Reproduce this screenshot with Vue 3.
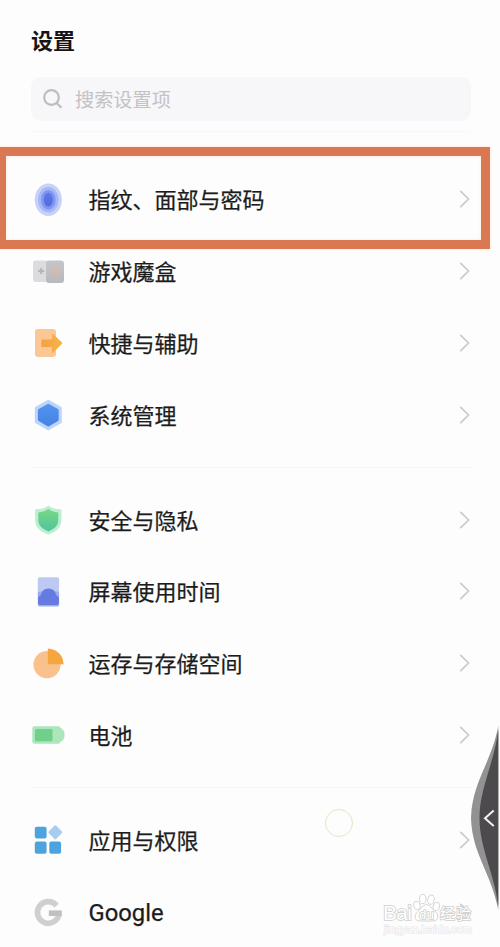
<script setup>
const groups = [
  [
    { icon: 'finger', label: '指纹、面部与密码' },
    { icon: 'game', label: '游戏魔盒' },
    { icon: 'shortcut', label: '快捷与辅助' },
    { icon: 'system', label: '系统管理' },
  ],
  [
    { icon: 'shield', label: '安全与隐私' },
    { icon: 'screen', label: '屏幕使用时间' },
    { icon: 'storage', label: '运存与存储空间' },
    { icon: 'battery', label: '电池' },
  ],
  [
    { icon: 'apps', label: '应用与权限' },
    { icon: 'google', label: 'Google', latin: true },
  ],
]
</script>

<template>
  <main class="screen">
    <h1 class="title">设置</h1>
    <div class="search">
      <svg class="search-icon" viewBox="0 0 22 22">
        <circle cx="9.5" cy="9.5" r="7.3" />
        <path d="M14.8 15.2 L19.5 19.8" />
      </svg>
      <span>搜索设置项</span>
    </div>

    <section v-for="(group, g) in groups" :key="g" class="group">
      <div v-for="row in group" :key="row.icon" class="row">
        <svg class="icon" viewBox="0 0 36 36">
          <defs>
            <linearGradient id="gFinger" x1="0" y1="0" x2="0" y2="1"><stop offset="0" stop-color="#5a7bea" /><stop offset="1" stop-color="#5868d8" /></linearGradient>
            <linearGradient id="gOrange" x1="0" y1="0" x2="1" y2="0"><stop offset="0" stop-color="#f3a045" /><stop offset="1" stop-color="#f8b548" /></linearGradient>
            <linearGradient id="gBlue" x1="0" y1="0" x2="0" y2="1"><stop offset="0" stop-color="#5393ed" /><stop offset="1" stop-color="#4583e5" /></linearGradient>
            <linearGradient id="gGreen" x1="0" y1="0" x2="0" y2="1"><stop offset="0" stop-color="#7ad783" /><stop offset="1" stop-color="#4fc4a0" /></linearGradient>
            <linearGradient id="gGrey" x1="0" y1="0" x2="0" y2="1"><stop offset="0" stop-color="#c6c6ca" /><stop offset="1" stop-color="#b9b9bd" /></linearGradient>
          </defs>
          <g v-if="row.icon === 'finger'">
            <ellipse cx="18.3" cy="17.7" rx="13.6" ry="16.2" fill="#c8d2f9" />
            <ellipse cx="18.3" cy="17.7" rx="10.3" ry="12.8" fill="#a6b7f6" />
            <ellipse cx="18.3" cy="17.7" rx="7.3" ry="9.8" fill="#8095ef" />
            <ellipse cx="18.3" cy="17.7" rx="4.5" ry="6.9" fill="url(#gFinger)" />
          </g>
          <g v-else-if="row.icon === 'game'">
            <rect x="3" y="6.5" width="15" height="21.5" rx="3" fill="#dcdcdf" />
            <rect x="16" y="6.5" width="18" height="22.5" rx="3" fill="url(#gGrey)" />
            <path d="M11.2 14 V20 M8.2 17 H14.2" stroke="#b3b3b8" stroke-width="2" />
            <circle cx="26.5" cy="14" r="1.7" fill="#ddbba8" />
            <circle cx="23.7" cy="17.2" r="1.7" fill="#e5b698" />
            <circle cx="29.3" cy="17.5" r="1.7" fill="#ddbba8" />
            <circle cx="26.5" cy="20.5" r="1.7" fill="#e5b698" />
          </g>
          <g v-else-if="row.icon === 'shortcut'">
            <rect x="5" y="4" width="21" height="28" rx="3" fill="#fac795" />
            <path d="M11.5 14.5 H22 V9.6 Q22 8 23.3 9.2 L31.8 17.2 Q32.7 18.2 31.8 19 L23.3 27.4 Q22 28.5 22 26.8 V22 H11.5 Z" fill="url(#gOrange)" />
          </g>
          <g v-else-if="row.icon === 'system'">
            <path d="M18.3 4.2 L30.3 11 V25 L18.3 31.8 L6.3 25 V11 Z" fill="#bdd5fa" stroke="#bdd5fa" stroke-width="3" stroke-linejoin="round" />
            <path d="M18.3 8.2 L27.2 13.2 V22.8 L18.3 27.9 L9.4 22.8 V13.2 Z" fill="url(#gBlue)" stroke="url(#gBlue)" stroke-width="3" stroke-linejoin="round" />
          </g>
          <g v-else-if="row.icon === 'shield'">
            <path d="M18.3 3.4 Q23.5 7.2 31.5 7.6 V18 Q31.5 28 18.3 32.6 Q5.1 28 5.1 18 V7.6 Q13 7.2 18.3 3.4 Z" fill="#bcefd2" />
            <path d="M18.3 6.8 Q22 10 28.3 10.5 V18.5 Q28.3 25.4 18.3 29.4 Q8.3 25.4 8.3 18.5 V10.5 Q14.5 10 18.3 6.8 Z" fill="url(#gGreen)" />
          </g>
          <g v-else-if="row.icon === 'screen'">
            <rect x="7.8" y="3.3" width="21.3" height="19" rx="2" fill="#bdc9f2" />
            <rect x="7.8" y="17.5" width="21.3" height="15" rx="2" fill="#9babf0" />
            <path d="M8 24.5 Q8 22.2 10.8 21.2 Q12 14.6 18.5 14.6 Q25 14.6 26.2 21.2 Q29 22.2 29 24.5 V28.8 Q29 31 26.8 31 H10.2 Q8 31 8 28.8 Z" fill="#667be1" />
          </g>
          <g v-else-if="row.icon === 'storage'">
            <circle cx="17" cy="18.6" r="13.6" fill="#f9c28c" />
            <path d="M17.8 2.6 Q32.5 4.1 33.6 18.2 H17.8 Z" fill="#f6a53f" />
          </g>
          <g v-else-if="row.icon === 'battery'">
            <path d="M4.5 9.3 H28.5 Q30 9.3 30.5 11 Q34.6 12.8 34.6 18 Q34.6 23.2 30.5 24.8 Q30 26.8 28.5 26.8 H4.5 Q2.3 26.8 2.3 24.6 V11.5 Q2.3 9.3 4.5 9.3 Z" fill="#ace6bb" />
            <rect x="5" y="12" width="17.5" height="12.3" rx="1.3" fill="#6fcf8b" />
          </g>
          <g v-else-if="row.icon === 'apps'">
            <rect x="4.8" y="4.8" width="11.8" height="11.8" rx="2" fill="#4fa3dc" />
            <rect x="4.8" y="19.6" width="11.8" height="12.2" rx="2" fill="#4fa3dc" />
            <rect x="19.3" y="19.6" width="11.8" height="12.2" rx="2" fill="#4fa3dc" />
            <rect x="20" y="5" width="10.6" height="10.6" rx="1.5" fill="#a9cdf1" transform="rotate(45 25.3 10.3)" />
          </g>
          <g v-else fill="none" stroke="#cfcfd1" stroke-width="5.6">
            <path d="M26.6 11.6 A10.8 10.8 0 1 0 29 19.6" />
            <path d="M18.8 19.2 H31.8" stroke="#c0c0c2" />
          </g>
        </svg>
        <span class="label" :class="{ latin: row.latin }">{{ row.label }}</span>
        <svg class="chevron" viewBox="0 0 12 20"><path d="M1.2 1.8 L9.6 10 L1.2 18.2" /></svg>
      </div>
    </section>

    <div class="highlight"></div>
    <div class="touch"></div>

    <svg class="drawer" viewBox="0 0 30 184">
      <path d="M28.3 0 C21 38 2 56 1 92 C2 128 21 146 28.3 184 Z" fill="#929293" />
      <path d="M28.3 4 C24 38 9.5 62 9.5 92 C9.5 122 24 146 28.3 180 Z" fill="#4c4a4d" />
      <path d="M23.7 84.5 L15 92.2 L23.7 100" fill="none" stroke="#f3f3f3" stroke-width="2" />
    </svg>

    <svg class="watermark" viewBox="0 0 94 46">
      <text x="0" y="27" textLength="29" class="mark bai">Bai</text>
      <g fill="#fff" stroke="#d4d4d4" stroke-width="1">
        <ellipse cx="34" cy="12.5" rx="3.2" ry="4.2" transform="rotate(-20 34 12.5)" />
        <ellipse cx="39.8" cy="6" rx="3.2" ry="4.7" />
        <ellipse cx="48" cy="6.6" rx="3.2" ry="4.7" transform="rotate(12 48 6.6)" />
        <ellipse cx="53.3" cy="13.5" rx="3.2" ry="4.2" transform="rotate(20 53.3 13.5)" />
        <path d="M43.5 11.5 Q46.5 11.5 49.5 16 Q55 19.5 55 23.5 Q54.5 28 50 28 H37 Q32 28 32 23.5 Q32 20 37.5 16 Q40.5 11.5 43.5 11.5 Z" />
      </g>
      <text x="36" y="25.5" textLength="15" class="mark du">du</text>
      <text x="57" y="26" textLength="31" class="mark jing">经验</text>
      <text x="1" y="39.5" textLength="88" class="mark url">jingyan.baidu.com</text>
    </svg>
  </main>
</template>

<style>
body {
  background: #fdfdfd;
}
</style>

<style scoped>
.screen {
  position: relative;
  box-sizing: border-box;
  width: 500px;
  height: 947px;
  overflow: hidden;
  padding: 23px 29px 0 31px;
  background: #fdfdfd;
  font-family: "Noto Sans CJK SC", sans-serif;
  color: #1c1c1c;
}
.title {
  margin: 0;
  height: 32px;
  line-height: 32px;
  font-size: 22px;
  font-weight: 700;
  color: #151515;
}
.search {
  display: flex;
  align-items: center;
  gap: 11px;
  box-sizing: border-box;
  height: 44px;
  margin-top: 22px;
  padding-left: 11px;
  border-radius: 10px;
  background: #f7f6f9;
  color: #c3c2c6;
  font-size: 19.2px;
}
.search-icon {
  width: 22px;
  height: 22px;
  fill: none;
  stroke: #bdbcc1;
  stroke-width: 2.2;
}
.group {
  padding-bottom: 16px;
  margin-bottom: 16px;
  border-bottom: 1px solid #f7f7f7;
}
.search + .group {
  margin-top: 10px;
  padding-top: 32px;
  border-top: 1px solid #f8f8f9;
}
.row {
  display: flex;
  align-items: center;
  height: 71.8px;
}
.icon {
  width: 36px;
  height: 36px;
  margin-left: -1px;
}
.label {
  flex: 1;
  margin-left: 22.5px;
  padding-bottom: 3px;
  font-size: 22px;
  font-weight: 400;
  line-height: 32px;
  white-space: nowrap;
  -webkit-text-stroke: 0.25px #1c1c1c;
}
.latin {
  padding: 2px 0 0;
  font-family: Roboto, sans-serif;
  font-size: 23.8px;
}
.chevron {
  width: 12px;
  height: 20px;
  margin-top: -1px;
  fill: none;
  stroke: #cbcbcd;
  stroke-width: 1.7;
}
.highlight {
  position: absolute;
  left: -3px;
  top: 147px;
  box-sizing: border-box;
  width: 493px;
  height: 102px;
  border: 9px solid #d97853;
  box-shadow: 0 0 3px #ffe5cb, inset 0 0 3px #ffe5cb;
}
.touch {
  position: absolute;
  left: 325px;
  top: 809px;
  box-sizing: border-box;
  width: 28px;
  height: 28px;
  border: 1px solid #eee1c6;
  border-radius: 50%;
}
.drawer {
  position: absolute;
  left: 470px;
  top: 726px;
  width: 30px;
  height: 184px;
}
.watermark {
  position: absolute;
  left: 383px;
  top: 893px;
  width: 94px;
  height: 46px;
}
.mark {
  fill: #fff;
  stroke: #cfcfcf;
  stroke-width: 1.6px;
  paint-order: stroke;
  font-family: "Liberation Sans", sans-serif;
}
.bai {
  font-size: 21px;
}
.du {
  font-size: 13px;
}
.jing {
  font-family: "Noto Sans CJK SC", sans-serif;
  font-size: 15px;
}
.url {
  font-size: 11px;
  stroke: #e6e6e6;
  stroke-width: 1.2px;
}
</style>
